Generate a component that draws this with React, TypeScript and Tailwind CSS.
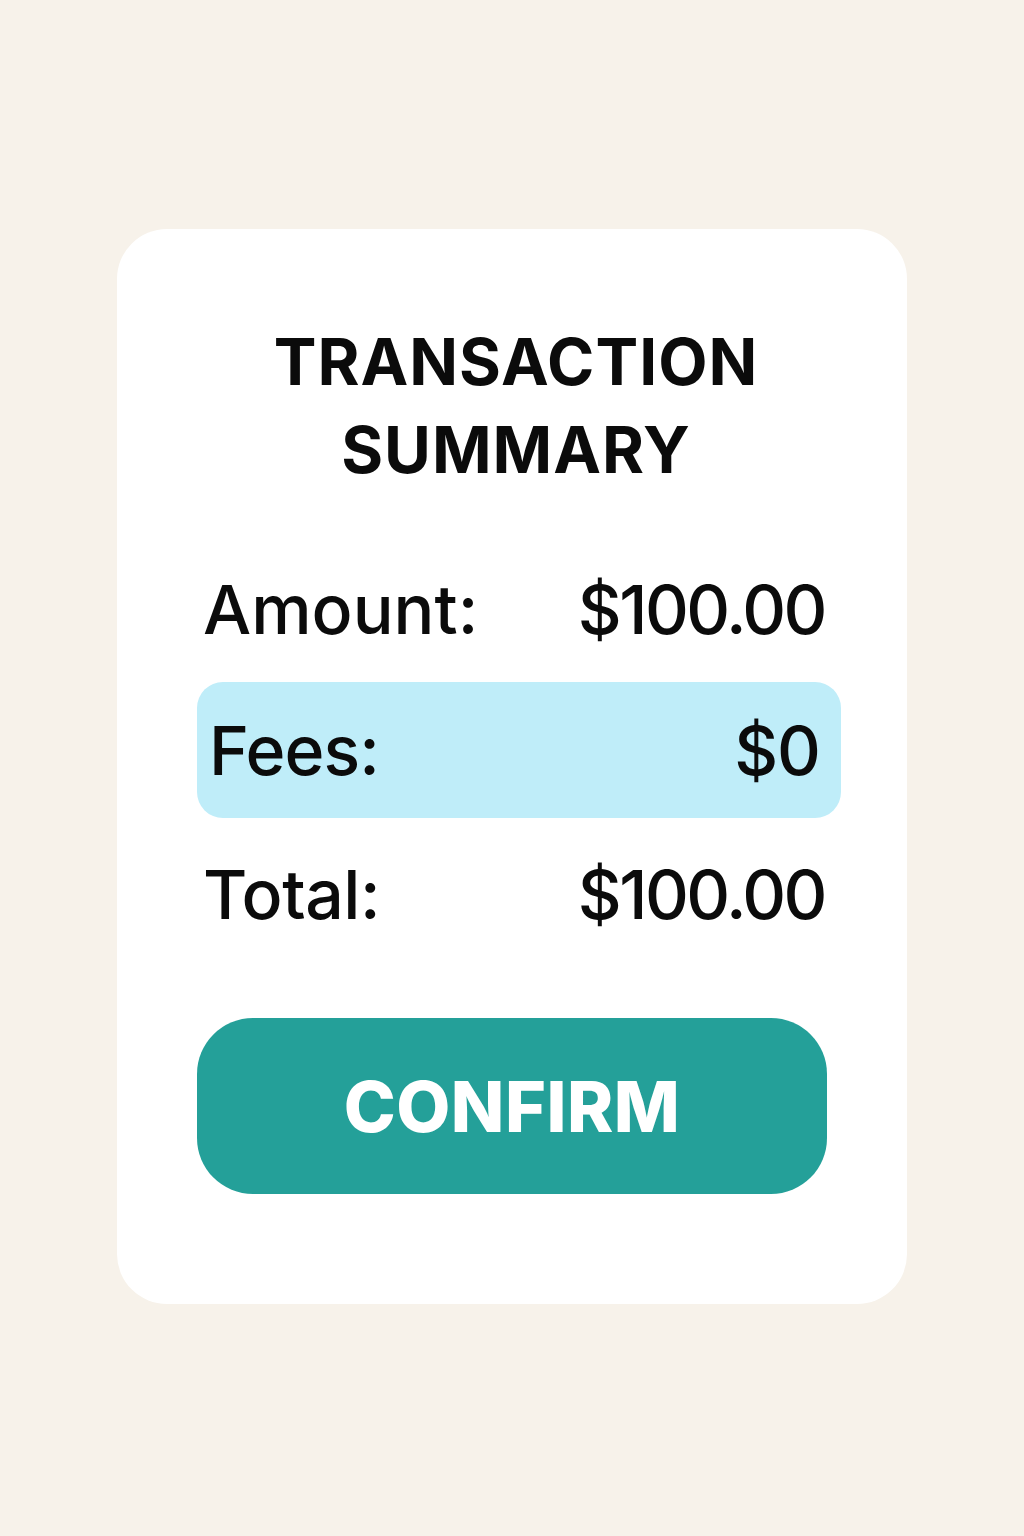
export default function App() {
  return (
    <div className="min-h-[1536px] w-full bg-[#f7f2ea] pt-[229px] font-['Inter','Liberation_Sans',sans-serif] text-[#0b0b0b]">
      <div className="mx-auto flex w-[790px] flex-col rounded-[50px] bg-white pt-[89px] pb-[110px]">
        <h1 className="pl-[8px] text-center text-[64px] leading-[88px] font-bold tracking-[1px]">
          TRANSACTION
          <br />
          SUMMARY
        </h1>

        <div className="mt-[75px] ml-[86px] mr-[80px] flex items-center justify-between text-[68px] leading-[80px] font-[550]">
          <span>Amount:</span>
          <span className="mr-[2px] tracking-[-2.5px]">$100.00</span>
        </div>

        <div className="mt-[33px] ml-[80px] mr-[66px] flex h-[136px] items-center justify-between rounded-[26px] bg-[#bfedf9] pl-[12px] pr-[21px] text-[68px] font-[550]">
          <span className="tracking-[-1px]">Fees:</span>
          <span className="tracking-[-1px]">$0</span>
        </div>

        <div className="mt-[36px] ml-[86px] mr-[80px] flex items-center justify-between text-[68px] leading-[80px] font-[550]">
          <span className="tracking-[-0.5px]">Total:</span>
          <span className="mr-[2px] tracking-[-2.5px]">$100.00</span>
        </div>

        <button className="mt-[84px] ml-[80px] mr-[80px] flex h-[176px] items-center justify-center rounded-[56px] bg-[#24a099] text-[70px] font-extrabold tracking-[0.5px] text-white">
          CONFIRM
        </button>
      </div>
    </div>
  )
}
